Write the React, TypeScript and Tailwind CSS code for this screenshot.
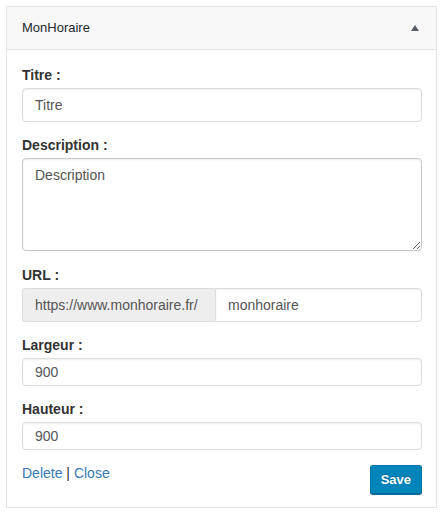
import React, { useState } from 'react'

const Field = ({ label, children, className = '' }: { label: string; children: React.ReactNode; className?: string }) => (
  <div className={className}>
    <label className="block text-[14px] leading-[20px] font-bold text-[#333] mb-[3px]">{label}</label>
    {children}
  </div>
)

const inputCls =
  'block w-full border border-[#ddd] rounded-[4px] bg-white px-[12px] text-[14px] text-[#555] outline-none shadow-[inset_0_1px_2px_rgba(0,0,0,0.07)] focus:border-[#5b9dd9]'

const App = () => {
  const [open, setOpen] = useState(true)

  return (
    <div className="p-[6px] font-['Liberation_Sans',Arial,sans-serif] bg-white min-h-screen">
      <div className="border border-[#e5e5e5] bg-white">
        <button
          type="button"
          onClick={() => setOpen(!open)}
          className="w-full h-[43px] flex items-center justify-between pl-[15px] pr-[17px] bg-[#f8f8f8] border-b border-[#e5e5e5] text-left"
        >
          <span className="text-[13px] text-[#23282d]">MonHoraire</span>
          <span
            className={`w-0 h-0 border-l-[4px] border-r-[4px] border-l-transparent border-r-transparent ${
              open ? 'border-b-[6px] border-b-[#555d66]' : 'border-t-[6px] border-t-[#555d66]'
            }`}
          />
        </button>

        {open && (
          <form className="pt-[15px] pl-[15px] pr-[14px] pb-[13px]" onSubmit={(e) => e.preventDefault()}>
            <Field label="Titre :">
              <input type="text" defaultValue="Titre" className={`${inputCls} h-[34px]`} />
            </Field>

            <Field label="Description :" className="mt-[13px]">
              <textarea
                defaultValue="Description"
                className="block w-full h-[93px] border border-[#c8c8c8] rounded-[4px] bg-white px-[12px] py-[6px] text-[14px] leading-[20px] text-[#555] outline-none shadow-[inset_0_1px_2px_rgba(0,0,0,0.07)]"
              />
            </Field>

            <Field label="URL :" className="mt-[14px]">
              <div className="flex h-[34px]">
                <span className="flex items-center w-[193px] shrink-0 px-[12px] bg-[#eee] border border-[#ddd] border-r-0 rounded-l-[4px] text-[14px] text-[#555] whitespace-nowrap">
                  https://www.monhoraire.fr/
                </span>
                <input
                  type="text"
                  defaultValue="monhoraire"
                  className="flex-1 min-w-0 border border-[#ddd] rounded-r-[4px] bg-white px-[12px] text-[14px] text-[#555] outline-none shadow-[inset_0_1px_2px_rgba(0,0,0,0.07)]"
                />
              </div>
            </Field>

            <Field label="Largeur :" className="mt-[13px]">
              <input type="text" defaultValue="900" className={`${inputCls} h-[28px]`} />
            </Field>

            <Field label="Hauteur :" className="mt-[13px]">
              <input type="text" defaultValue="900" className={`${inputCls} h-[28px]`} />
            </Field>

            <div className="mt-[13px] flex items-start justify-between">
              <div className="text-[14px] leading-[20px] text-[#333]">
                <a href="#" className="text-[#3679b9] hover:underline">Delete</a>
                {' | '}
                <a href="#" className="text-[#3679b9] hover:underline">Close</a>
              </div>
              <button
                type="submit"
                className="mt-[2px] h-[29px] px-[10px] rounded-[3px] bg-[#0085ba] border border-[#0073aa] border-b-[#006799] shadow-[0_1px_0_#006799] text-white text-[13px] font-bold [text-shadow:0_-1px_1px_#006799] hover:bg-[#008ec2]"
              >
                Save
              </button>
            </div>
          </form>
        )}
      </div>
    </div>
  )
}

export default App
